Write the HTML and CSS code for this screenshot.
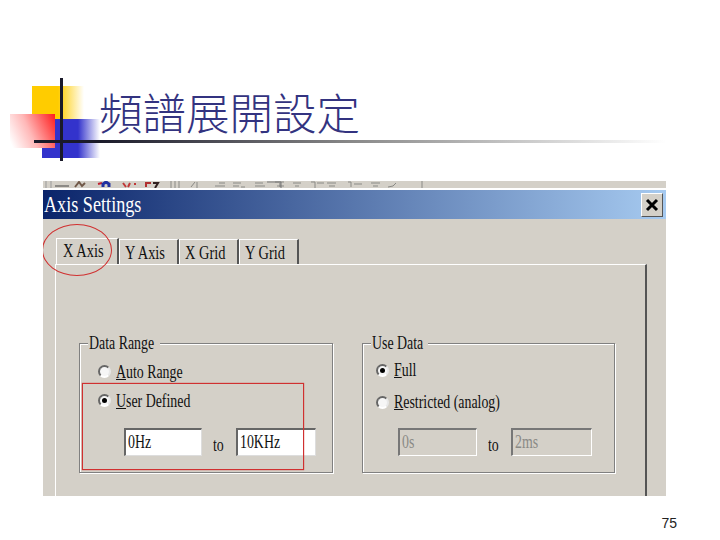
FILE: index.html
```html
<!DOCTYPE html>
<html lang="zh-Hant">
<head>
  <meta charset="UTF-8">
  <title>頻譜展開設定</title>
  <link rel="stylesheet" href="styles.css">
</head>
<body>
  <div class="slide">
    <!-- bullet graphic -->
    <div class="deco yellow"></div>
    <div class="deco blue"></div>
    <div class="deco red"></div>
    <div class="deco vline"></div>
    <div class="deco hline"></div>

    <h1 class="title">頻譜展開設定</h1>

    <div class="dialog">
      <div class="toolbar">
        <svg width="623" height="7" viewBox="0 0 623 7">
          <path d="M3 0v7M8 0v7" stroke="#999" fill="none"/>
          <path d="M12 5h14" stroke="#444" fill="none"/>
          <path d="M32 6l4-5 3 4 3-3" stroke="#705848" stroke-width="2" fill="none"/>
          <path d="M55 3l4-1" stroke="#c02030" stroke-width="2" fill="none"/>
          <path d="M60 6v-3l3-2 3 2v3" stroke="#2030a0" stroke-width="3" fill="none"/>
          <path d="M80 2l3 4M87 2l-2 4M91 3h2" stroke="#c03838" stroke-width="2" fill="none"/>
          <path d="M103 6v-4h5" stroke="#b03030" stroke-width="2" fill="none"/>
          <path d="M110 2h5l-3 5" stroke="#302020" stroke-width="2" fill="none"/>
          <path d="M128 0v7M132 0v7M136 0v7M148 6l4-5M154 1v6M172 5h10M176 2h6M190 2h8M190 5h6M198 6h4M212 2h8M212 5h10M232 1h9M234 5h7M250 2h8M252 5h4M268 1h4v6M274 2h7M284 2h9M286 5h6M305 1h3v5M311 3h8M328 2h9M330 5h5M345 6l5-1 3-3M379 0v7" stroke="#8a8a86" fill="none"/>
          <path d="M224 1h14v6M237 2v4" stroke="#777" fill="none"/>
        </svg>
      </div>
      <div class="titlebar">
        <span class="caption">Axis Settings</span>
        <button class="close">
          <svg width="14" height="14" viewBox="0 0 14 14"><path d="M2 2l10 10M12 2L2 12" stroke="#000" stroke-width="3"/></svg>
        </button>
      </div>
      <div class="dialog-body">
        <div class="tabs">
          <div class="tab active"><span class="t">X Axis</span></div>
          <div class="tab"><span class="t">Y Axis</span></div>
          <div class="tab"><span class="t">X Grid</span></div>
          <div class="tab"><span class="t">Y Grid</span></div>
        </div>
        <div class="panel">
          <div class="group">
            <div class="legend"><span class="t">Data Range</span></div>
            <div class="radio-row"><i class="radio"></i><span class="t"><u>A</u>uto Range</span></div>
            <div class="radio-row"><i class="radio on"></i><span class="t"><u>U</u>ser Defined</span></div>
            <div class="range">
              <div class="field"><span class="t">0Hz</span></div>
              <span class="to t">to</span>
              <div class="field wide"><span class="t">10KHz</span></div>
            </div>
          </div>
          <div class="group use-data">
            <div class="legend"><span class="t">Use Data</span></div>
            <div class="radio-row"><i class="radio on"></i><span class="t"><u>F</u>ull</span></div>
            <div class="radio-row"><i class="radio"></i><span class="t"><u>R</u>estricted (analog)</span></div>
            <div class="range">
              <div class="field off"><span class="t">0s</span></div>
              <span class="to t">to</span>
              <div class="field off wide"><span class="t">2ms</span></div>
            </div>
          </div>
        </div>
      </div>
      <div class="mark-tab"></div>
      <div class="mark-range"></div>
    </div>

    <div class="page-no">75</div>
  </div>
</body>
</html>
```

FILE: styles.css
```css
* { margin: 0; padding: 0; box-sizing: border-box; }
body {
  background-color: white;
  font-family: "Liberation Serif", serif;
  color: #111;
}

.slide {
  position: relative;
  width: 720px;
  height: 540px;
  overflow: hidden;
  padding-top: 86px;
}

/* bullet graphic */
.deco { position: absolute; }
.yellow { left: 32px; top: 86px; width: 52px; height: 34px; background: linear-gradient(to right, #ffcc00 50%, #fff); }
.blue { left: 42px; top: 119px; width: 58px; height: 39px; background: linear-gradient(to right, #3333cc 62%, #fff); }
.red { left: 10px; top: 114px; width: 45px; height: 34px; background: linear-gradient(65deg, #fff 5%, #ffb8b8 45%, #ff1c1c 100%); }
.vline { left: 60px; top: 78px; width: 3px; height: 83px; background-color: #1a1a2a; }
.hline { left: 34px; top: 140px; width: 632px; height: 3px; background: linear-gradient(to right, #1a1a2a 10%, #888 50%, #fff); }

.title {
  margin-left: 99px;
  height: 95px;
  font-family: "Noto Sans CJK TC", sans-serif;
  font-size: 43.5px;
  font-weight: 300;
  line-height: 52px;
  color: #333380;
}

.dialog {
  position: relative;
  display: flex;
  flex-direction: column;
  width: 623px;
  height: 315px;
  margin-left: 43px;
  overflow: hidden;
}

.toolbar { flex: none; height: 7px; background-color: #d4d0c8; line-height: 0; }

.titlebar {
  flex: none;
  display: flex;
  align-items: center;
  justify-content: space-between;
  height: 29px;
  margin-top: 2px;
  padding-right: 3px;
  background: linear-gradient(to right, #0a246a, #a6caf0);
}
.caption {
  display: inline-block;
  font-size: 23px;
  color: white;
  transform: scaleX(.79);
  transform-origin: left;
  margin-left: 1px;
}
.close {
  display: flex;
  align-items: center;
  justify-content: center;
  width: 22px;
  height: 24px;
  background-color: #d4d0c8;
  border: 1px solid;
  border-color: #fff #555 #555 #fff;
}

.dialog-body { flex: 1; padding: 19px 19px 0 12px; background-color: #d4d0c8; }

.t { display: inline-block; transform: scaleX(.73); transform-origin: left; white-space: nowrap; }

.tabs { display: flex; height: 26px; padding-left: 1px; align-items: flex-end; }
.tab {
  width: 60px;
  height: 25px;
  padding: 1px 0 0 5px;
  font-size: 19px;
  line-height: 24px;
  border: solid;
  border-width: 1px 2px 0 1px;
  border-color: #fff #555 #fff #fff;
}
.tab .t { transform: scaleX(.76); }
.tab.active { width: 63px; height: 26px; padding: 0 0 0 6px; }

.panel {
  display: flex;
  gap: 29px;
  height: 232px;
  padding: 78px 0 0 23px;
  border: solid;
  border-width: 1px 2px 0 1px;
  border-color: #fff #555 #fff #fff;
}

.group {
  position: relative;
  width: 254px;
  height: 130px;
  padding: 13px 0 0 18px;
  border: 1px solid #808080;
  box-shadow: 1px 1px 0 #fff, inset 1px 1px 0 #fff;
  font-size: 19px;
}
.use-data { width: 253px; padding: 10px 0 0 13px; }
.use-data .radio-row { height: 32px; }
.use-data .range { margin: 10px 0 0 22px; }
.use-data .legend { width: 57px; }

.legend {
  position: absolute;
  top: -11px;
  left: 8px;
  width: 72px;
  padding-left: 1px;
  line-height: 20px;
  background-color: #d4d0c8;
}

.radio-row { display: flex; align-items: center; gap: 5px; height: 29px; line-height: 22px; }
.radio {
  width: 13px;
  height: 13px;
  display: flex;
  align-items: center;
  justify-content: center;
  border-radius: 50%;
  border: 2px solid;
  border-color: #666 #e8e8e8 #fff #666;
  background-color: #f6f6f6;
}
.radio.on::after {
  content: "";
  width: 5px;
  height: 5px;
  border-radius: 50%;
  background-color: black;
}

.range { display: flex; align-items: center; gap: 11px; margin: 13px 0 0 26px; }
.field {
  width: 78px;
  height: 28px;
  padding-left: 2px;
  background-color: white;
  line-height: 24px;
  border: solid;
  border-color: #666 #ddd #ddd #666;
  border-width: 2px 1px 1px 2px;
}
.field.wide { width: 80px; }
.field.off { width: 79px; background-color: #d4d0c8; color: #8a8a86; border-color: #777 #fff #fff #777; }
.field.off.wide { width: 81px; }
.to { width: 12px; margin-top: 6px; }

/* red marks drawn on top of the capture */
.mark-tab {
  position: absolute;
  left: -1px;
  top: 43px;
  width: 70px;
  height: 52px;
  border: 1px solid #d03030;
  border-radius: 50%;
}
.mark-range {
  position: absolute;
  left: 39px;
  top: 202px;
  width: 222px;
  height: 87px;
  border: 1px solid #d03030;
  box-shadow: 0 0 1px #d03030;
}

.page-no {
  margin-top: 20px;
  padding-right: 43px;
  text-align: right;
  font-family: "Liberation Sans", sans-serif;
  font-size: 14px;
  line-height: 14px;
  color: #222;
}
```
